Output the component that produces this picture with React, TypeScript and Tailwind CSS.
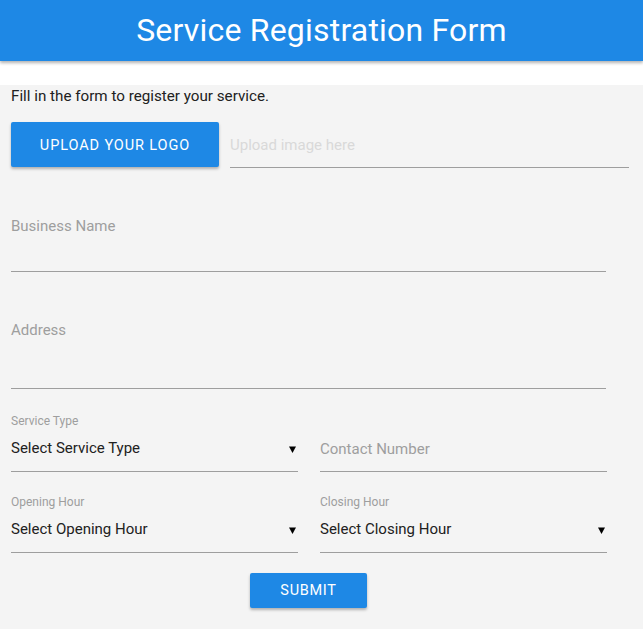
import React from "react";

const font = { fontFamily: "Roboto, 'Noto Sans', sans-serif" };

function Arrow() {
  return (
    <svg width="7" height="7" viewBox="0 0 7 7" className="mr-[2px] mt-[1px]">
      <path d="M0 0.5 L7 0.5 L3.5 7 Z" fill="#000" />
    </svg>
  );
}

export default function App() {
  return (
    <div className="w-[643px] bg-white font-['Roboto',sans-serif]" style={font}>
      <header className="h-[61px] bg-[#1e88e5] shadow-[0_2px_3px_rgba(0,0,0,0.3)] flex items-center justify-center">
        <h1 className="text-white text-[32px] leading-none tracking-[0.2px] pb-[1px]">Service Registration Form</h1>
      </header>
      <section className="mt-[24px] bg-[#f4f4f4] pl-[11px] pb-[21px]">
        <p className="text-[15.2px] leading-[22px] text-[#212121]">Fill in the form to register your service.</p>
        <div className="mt-[15px] flex h-[46px] w-[618px]">
          <button className="h-[45px] w-[208px] rounded-[2px] bg-[#1e88e5] text-white text-[14.5px] tracking-[0.9px] pt-[2px] shadow-[0_2px_3px_rgba(0,0,0,0.28)]">
            UPLOAD YOUR LOGO
          </button>
          <div className="ml-[11px] flex-1 border-b border-[#9e9e9e] flex items-center pt-[2px]">
            <span className="text-[15px] text-[#d9d9d9]">Upload image here</span>
          </div>
        </div>
        <div className="w-[595px]">
          <div className="mt-[48px] text-[15px] leading-[20px] text-[#9e9e9e]">Business Name</div>
          <div className="h-[36px] border-b border-[#9e9e9e]" />
          <div className="mt-[48px] text-[15px] leading-[20px] text-[#9e9e9e]">Address</div>
          <div className="h-[49px] border-b border-[#9e9e9e]" />
          <div className="mt-[24px] grid grid-cols-[287px_287px] gap-x-[22px]">
            <div>
              <div className="text-[12px] leading-[16px] text-[#9e9e9e]">Service Type</div>
              <div className="h-[43px] border-b border-[#9e9e9e] flex items-center justify-between pb-[3px]">
                <span className="text-[15px] text-[#212121]">Select Service Type</span>
                <Arrow />
              </div>
            </div>
            <div>
              <div className="h-[16px]" />
              <div className="h-[43px] border-b border-[#9e9e9e] flex items-center pb-[1px]">
                <span className="text-[15px] text-[#9e9e9e]">Contact Number</span>
              </div>
            </div>
          </div>
          <div className="mt-[22px] grid grid-cols-[287px_287px] gap-x-[22px]">
            <div>
              <div className="text-[12px] leading-[16px] text-[#9e9e9e]">Opening Hour</div>
              <div className="h-[43px] border-b border-[#9e9e9e] flex items-center justify-between pb-[3px]">
                <span className="text-[15px] text-[#212121]">Select Opening Hour</span>
                <Arrow />
              </div>
            </div>
            <div>
              <div className="text-[12px] leading-[16px] text-[#9e9e9e]">Closing Hour</div>
              <div className="h-[43px] border-b border-[#9e9e9e] flex items-center justify-between pb-[3px]">
                <span className="text-[15px] text-[#212121]">Select Closing Hour</span>
                <Arrow />
              </div>
            </div>
          </div>
          <div className="mt-[20px] flex justify-center">
            <button className="h-[35px] w-[117px] rounded-[2px] bg-[#1e88e5] text-white text-[14.5px] tracking-[0.7px] pt-[1px] shadow-[0_2px_3px_rgba(0,0,0,0.28)]">
              SUBMIT
            </button>
          </div>
        </div>
      </section>
    </div>
  );
}
